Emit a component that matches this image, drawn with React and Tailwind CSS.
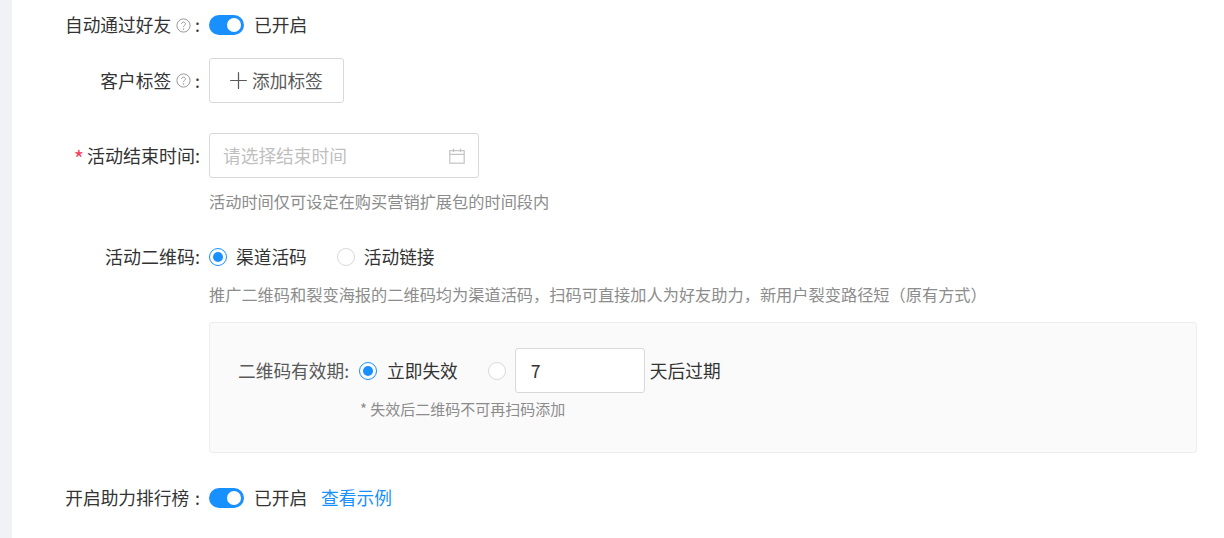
import React from "react";
import { Plus } from "lucide-react";

const font = "font-['Noto_Sans_CJK_SC','Noto_Sans',sans-serif]";

function HelpIcon() {
  return (
    <svg width="15" height="15" viewBox="0 0 15 15" fill="none" className="ml-[5px] mt-[2px] shrink-0">
      <circle cx="7.5" cy="7.5" r="6.6" stroke="#999" strokeWidth="1" />
      <path d="M5.5 6c0-1.1.9-1.9 2-1.9s2 .8 2 1.8c0 1.4-2 1.5-2 3" stroke="#999" strokeWidth="1" />
      <circle cx="7.5" cy="10.9" r=".75" fill="#999" />
    </svg>
  );
}

function CalendarIcon() {
  return (
    <svg width="16" height="16" viewBox="0 0 16 16" fill="none" stroke="#c4c4c4" strokeWidth="1.2">
      <rect x="0.8" y="2.6" width="14.4" height="12.6" />
      <path d="M0.8 6.4h14.4M4.5 0.5v3.6M11.5 0.5v3.6" />
    </svg>
  );
}

function Toggle() {
  return (
    <span className="flex h-5 w-[35px] items-center justify-end rounded-full bg-[#1890ff] pr-[3px]">
      <span className="h-[14px] w-[14px] rounded-full bg-white" />
    </span>
  );
}

function Radio({ checked, className = "" }) {
  return (
    <span
      className={
        checked
          ? `flex h-[18px] w-[18px] shrink-0 items-center justify-center rounded-full border border-[#1890ff] bg-white ${className}`
          : `h-[18px] w-[18px] shrink-0 rounded-full border border-[#d9d9d9] bg-white ${className}`
      }
    >
      {checked && <span className="h-[10px] w-[10px] rounded-full bg-[#1890ff]" />}
    </span>
  );
}

function Label({ children, className = "" }) {
  return (
    <div className={`mb-[2px] flex w-[200px] shrink-0 items-center justify-end text-[#333] ${className}`}>
      {children}
    </div>
  );
}

export default function App() {
  return (
    <div className={`${font} flex h-[538px] w-[1224px] overflow-hidden bg-white text-[17.7px] leading-6`}>
      <div className="w-3 shrink-0 bg-[#f0f2f5]" />
      <div className="-ml-3 flex-1">
        <div className="flex h-[50px] items-center">
          <Label>
            自动通过好友
            <HelpIcon />
            <span className="ml-[4px]">:</span>
          </Label>
          <div className="ml-[9px] flex items-center">
            <Toggle />
            <span className="mb-[2px] ml-[10px] text-[#333]">已开启</span>
          </div>
        </div>

        <div className="mt-2 flex h-[45px] items-center">
          <Label>
            客户标签
            <HelpIcon />
            <span className="ml-[4px]">:</span>
          </Label>
          <button className="ml-[9px] flex h-[45px] w-[135px] items-center rounded-[3px] border border-[#d9d9d9] bg-white pl-[15px] text-[#595959]">
            <Plus size={27} strokeWidth={1.1} />
            <span className="mb-[2px]">添加标签</span>
          </button>
        </div>

        <div className="mt-[30px] flex h-[45px] items-center">
          <Label className="text-[18px]">
            <span className="mr-[3px] mt-[4px] text-[22px] leading-none text-[#f5405a]">*</span>
            活动结束时间:
          </Label>
          <div className="ml-[9px] flex h-[45px] w-[270px] items-center justify-between rounded-[3px] border border-[#d9d9d9] bg-white pl-[13px] pr-[13px]">
            <span className="mb-[2px] text-[#bfbfbf]">请选择结束时间</span>
            <CalendarIcon />
          </div>
        </div>

        <p className="ml-[209px] mt-[11px] text-[16.22px] text-[#8c8c8c]">活动时间仅可设定在购买营销扩展包的时间段内</p>

        <div className="mt-[32px] flex h-6 items-center">
          <Label className="text-[18px]">活动二维码:</Label>
          <div className="ml-[9px] flex items-center">
            <Radio checked />
            <span className="mb-[2px] ml-[9px] text-[#333]">渠道活码</span>
            <Radio className="ml-[30px]" />
            <span className="mb-[2px] ml-[9px] text-[#333]">活动链接</span>
          </div>
        </div>

        <p className="ml-[209px] mt-[13px] text-[16.22px] text-[#8c8c8c]">
          推广二维码和裂变海报的二维码均为渠道活码，扫码可直接加人为好友助力，新用户裂变路径短（原有方式）
        </p>

        <div className="ml-[209px] mt-[16px] h-[131px] w-[988px] rounded-[3px] border border-[#eeeeee] bg-[#fafafa] pt-[25px]">
          <div className="flex h-[45px] items-center">
            <span className="mb-[2px] ml-7 text-[#595959]">二维码有效期:</span>
            <Radio checked className="ml-[10px]" />
            <span className="mb-[2px] ml-[10px] text-[#333]">立即失效</span>
            <Radio className="ml-[30px]" />
            <div className="ml-[9px] flex h-[45px] w-[130px] items-center rounded-[3px] border border-[#d9d9d9] bg-white pl-[15px] text-[#333]">
              <span className="mb-[2px]">7</span>
            </div>
            <span className="mb-[2px] ml-[5px] text-[#333]">天后过期</span>
          </div>
          <p className="ml-[150px] mt-[4px] text-[15px] text-[#8c8c8c]">* 失效后二维码不可再扫码添加</p>
        </div>

        <div className="mt-[23px] flex h-[44px] items-center">
          <Label>
            开启助力排行榜
            <span className="ml-[6px]">:</span>
          </Label>
          <div className="ml-[9px] flex items-center">
            <Toggle />
            <span className="mb-[2px] ml-[10px] text-[#333]">已开启</span>
            <a className="mb-[2px] ml-[14px] text-[#1890ff]">查看示例</a>
          </div>
        </div>
      </div>
    </div>
  );
}
